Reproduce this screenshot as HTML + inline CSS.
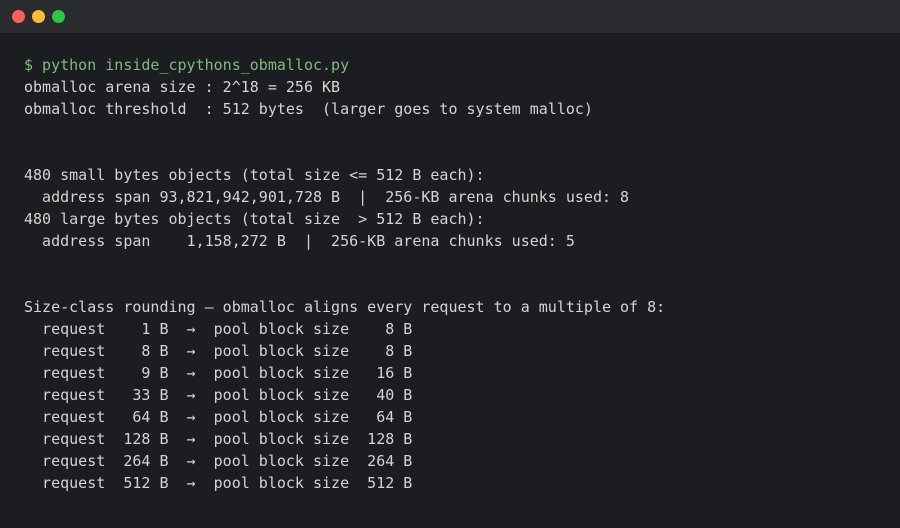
<!DOCTYPE html>
<html><head><style>
html,body{margin:0;padding:0;width:900px;height:528px;background:#1c1d21;overflow:hidden}
.bar{height:33px;background:#2a2b2f;position:relative}
.d{position:absolute;top:10px;width:13px;height:13px;border-radius:50%}
pre{margin:0;padding:21px 0 0 24px;font-family:"DejaVu Sans Mono","Liberation Mono",monospace;font-size:15px;line-height:22px;color:#d4d4d4}
.g{color:#7dba7d}
</style></head><body>
<div class="bar"><div class="d" style="left:12px;background:#fe5f57"></div><div class="d" style="left:32px;background:#febc2e"></div><div class="d" style="left:52px;background:#28c840"></div></div>
<pre><span class="g">$ python inside_cpythons_obmalloc.py</span>
obmalloc arena size : 2^18 = 256 KB
obmalloc threshold  : 512 bytes  (larger goes to system malloc)


480 small bytes objects (total size &lt;= 512 B each):
  address span 93,821,942,901,728 B  |  256-KB arena chunks used: 8
480 large bytes objects (total size  &gt; 512 B each):
  address span    1,158,272 B  |  256-KB arena chunks used: 5


Size-class rounding — obmalloc aligns every request to a multiple of 8:
  request    1 B  →  pool block size    8 B
  request    8 B  →  pool block size    8 B
  request    9 B  →  pool block size   16 B
  request   33 B  →  pool block size   40 B
  request   64 B  →  pool block size   64 B
  request  128 B  →  pool block size  128 B
  request  264 B  →  pool block size  264 B
  request  512 B  →  pool block size  512 B</pre>
</body></html>
